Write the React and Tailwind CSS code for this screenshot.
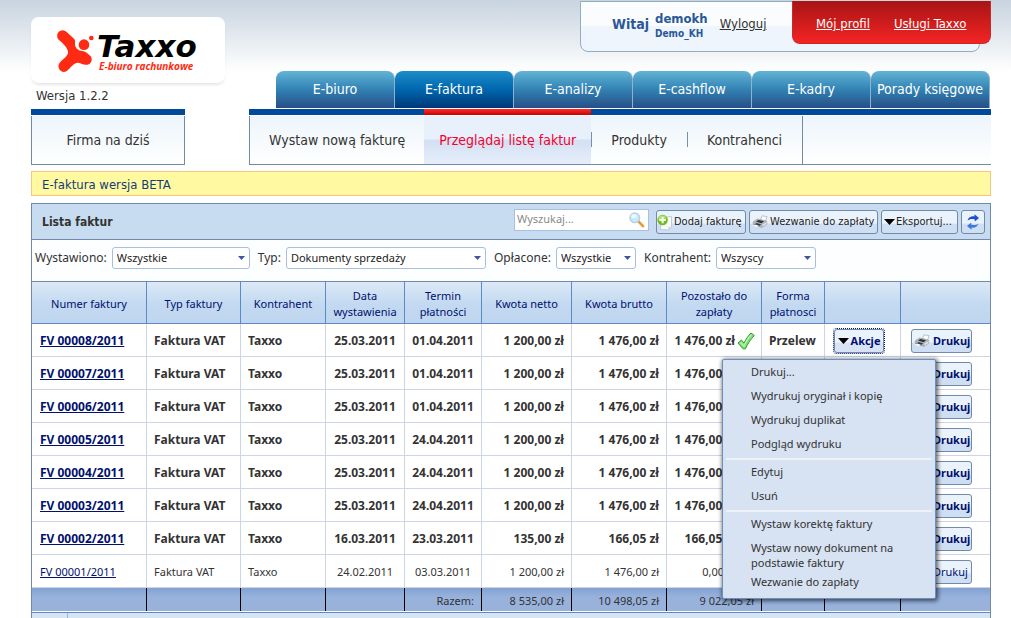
import { useState } from "react";

const TABS = ["E-biuro", "E-faktura", "E-analizy", "E-cashflow", "E-kadry", "Porady księgowe"];

const COLUMNS = [
  { label: "Numer faktury", width: "w-[115px]" },
  { label: "Typ faktury", width: "w-[94px]" },
  { label: "Kontrahent", width: "w-[85px]" },
  { label: "Data wystawienia", width: "w-[79px]" },
  { label: "Termin płatności", width: "w-[77px]" },
  { label: "Kwota netto", width: "w-[90px]" },
  { label: "Kwota brutto", width: "w-[95px]" },
  { label: "Pozostało do zapłaty", width: "w-[95px]" },
  { label: "Forma płatnosci", width: "w-[63px]" },
  { label: "", width: "w-[76px]" },
  { label: "", width: "" },
];

const INVOICES = [
  ["FV 00008/2011", "25.03.2011", "01.04.2011", "1 200,00 zł", "1 476,00 zł", "1 476,00 zł"],
  ["FV 00007/2011", "25.03.2011", "01.04.2011", "1 200,00 zł", "1 476,00 zł", "1 476,00 zł"],
  ["FV 00006/2011", "25.03.2011", "01.04.2011", "1 200,00 zł", "1 476,00 zł", "1 476,00 zł"],
  ["FV 00005/2011", "25.03.2011", "24.04.2011", "1 200,00 zł", "1 476,00 zł", "1 476,00 zł"],
  ["FV 00004/2011", "25.03.2011", "24.04.2011", "1 200,00 zł", "1 476,00 zł", "1 476,00 zł"],
  ["FV 00003/2011", "25.03.2011", "24.04.2011", "1 200,00 zł", "1 476,00 zł", "1 476,00 zł"],
  ["FV 00002/2011", "16.03.2011", "23.03.2011", "135,00 zł", "166,05 zł", "166,05 zł"],
  ["FV 00001/2011", "24.02.2011", "03.03.2011", "1 200,00 zł", "1 476,00 zł", "0,00 zł"],
];

const MENU_GROUPS = [
  ["Drukuj...", "Wydrukuj oryginał i kopię", "Wydrukuj duplikat", "Podgląd wydruku"],
  ["Edytuj", "Usuń"],
  ["Wystaw korektę faktury", "Wystaw nowy dokument na podstawie faktury", "Wezwanie do zapłaty"],
];

function LogoMark() {
  return (
    <svg viewBox="0 0 120 132" className="h-11 w-10 shrink-0" aria-hidden="true">
      <path
        fill="#ff2a13"
        d="M35 12 L57 32 C62 37 60 43 60 48 C61 62 70 68 82 69 C90 70 96 75 103 81 A16 16 0 0 1 97 110 C86 113 76 104 68 104 C58 105 48 116 41 124 A16 16 0 0 1 13 106 C18 98 37 86 39 75 C40 63 30 50 11 35 A15.500 15.500 0 0 1 35 12Z"
      />
      <circle cx="87" cy="50" r="16" fill="#ff2a13" />
      <circle cx="109" cy="30" r="7" fill="#ff2a13" />
    </svg>
  );
}

function CheckIcon() {
  return (
    <svg viewBox="0 0 18 18" className="h-[18px] w-[18px] shrink-0" aria-hidden="true">
      <path d="M1 11 L4.500 8 L7 11 C9 7 11.500 3.500 14 1 L17.300 3.500 C13.500 7.500 10.500 12 8.500 16.800 L6 16.800 Z" fill="#7fe07a" stroke="#2f9e32" strokeWidth="1" strokeLinejoin="round" />
      <path d="M3.500 10.500 L7 14 C9 9.500 11.500 5.500 14.500 2.800" fill="none" stroke="#baf5b0" strokeWidth="1.200" />
    </svg>
  );
}

function PrinterIcon() {
  return (
    <svg viewBox="0 0 16 16" className="h-4 w-4 shrink-0" aria-hidden="true">
      <path d="M8.500 5.500 L10 1.800 L15 2.600 L13.500 7.500 Z" fill="#fcfdff" stroke="#a4aab4" strokeWidth=".7" />
      <path d="M1 8 L5.500 5 L14.500 7 L15 10 L10 13.500 L1.500 11 Z" fill="#b0b5bb" stroke="#8f959d" strokeWidth=".5" />
      <path d="M4 7.600 L6.500 5.900 L12 7.200 L9.500 9.200 Z" fill="#2f3338" />
      <path d="M2 10.500 L4.800 9.100 L9.300 10.500 L6.800 12.200 Z" fill="#3a3e44" />
      <path d="M.5 11.600 L3.500 10.600 L7 11.800 L4.500 13.300 Z" fill="#f2f4f6" />
      <path d="M10.500 10.500 L14.500 8 L14.500 10 L10.500 12.800 Z" fill="#dfe2e6" />
    </svg>
  );
}

function AddDocIcon() {
  return (
    <svg viewBox="0 0 16 17" className="h-[17px] w-4 shrink-0" aria-hidden="true">
      <path d="M4 3.500 L14.500 2.500 L14.500 13 L11.500 16 L3.500 15.500 Z" fill="#f8fafc" stroke="#b3bfcc" strokeWidth=".8" />
      <path d="M11 16 L11.500 12.800 L14.500 13Z" fill="#cfd7e0" />
      <circle cx="5.600" cy="6" r="5.200" fill="#6cbd1b" />
      <ellipse cx="5.200" cy="4" rx="4" ry="2.700" fill="#a9e065" />
      <path d="M5.600 2.800 V9.200 M2.400 6 H8.800" stroke="#fff" strokeWidth="2" />
    </svg>
  );
}

function SearchIcon() {
  return (
    <svg viewBox="0 0 16 16" className="h-4 w-4 shrink-0" aria-hidden="true">
      <path d="M9.500 9.500 L14 14.200" stroke="#e59a3c" strokeWidth="2.600" strokeLinecap="round" />
      <circle cx="5.800" cy="5.800" r="4.900" fill="#c9e9fb" stroke="#b3cfe6" strokeWidth="1.300" />
      <ellipse cx="4.800" cy="4.300" rx="2.600" ry="2" fill="#effaff" />
    </svg>
  );
}

function RefreshIcon() {
  return (
    <svg viewBox="0 0 14 16" className="h-4 w-3.5 shrink-0" aria-hidden="true">
      <path d="M1.500 6.500 C2.500 3 6 1.800 8.500 2.500 L8.500 .3 L13 4 L8.800 7.500 L8.600 5.300 C6 4.500 3.500 5 1.500 6.500Z" fill="#1c4fd0" />
      <path d="M12.500 9.500 C11.500 13 8 14.200 5.500 13.500 L5.500 15.700 L1 12 L5.200 8.500 L5.400 10.700 C8 11.500 10.500 11 12.500 9.500Z" fill="#3a78de" />
    </svg>
  );
}

function DownTriangle() {
  return (
    <svg viewBox="0 0 11 6" className="h-1.5 w-[11px] shrink-0" aria-hidden="true">
      <path d="M0 0H11L5.500 6Z" fill="#000" />
    </svg>
  );
}

const BUTTON =
  "flex h-6 items-center rounded-[3px] border border-[#7389a8] bg-linear-to-b from-[#eaf2fc] from-55% to-[#cfdff3] to-60% whitespace-nowrap";

function ToolButton({ children, className, label }) {
  return (
    <button type="button" aria-label={label} className={`${BUTTON} font-['DejaVu_Sans_Condensed',sans-serif] text-[11px] text-[#222] ${className}`}>
      {children}
    </button>
  );
}

function Filter({ id, label, options, width }) {
  return (
    <div className="flex items-center gap-[5px]">
      <label htmlFor={id} className="text-xs whitespace-nowrap">{label}</label>
      <div className={`relative ${width}`}>
        <select id={id} className="block h-[22px] w-full appearance-none rounded-[3px] border border-[#a7bfe0] bg-white pl-1 text-[11px] text-[#222]">
          {options.map((o) => (
            <option key={o}>{o}</option>
          ))}
        </select>
        <svg viewBox="0 0 7 4" className="pointer-events-none absolute top-[9px] right-[5px] h-1 w-[7px]" aria-hidden="true">
          <path d="M0 0H7L3.500 4Z" fill="#4055a0" />
        </svg>
      </div>
    </div>
  );
}

function ActionMenu() {
  return (
    <div role="menu" className="absolute top-[30px] -left-28 z-10 w-[214px] rounded-[2px] border border-[#6a8fc0] bg-[#d7e2f2] pb-1 text-left text-[11px] leading-[15px] font-normal text-[#333] shadow-[1px_1px_4px_1px_rgba(0,0,0,0.6)]">
      {MENU_GROUPS.map((group, i) => (
        <div key={group[0]}>
          {i > 0 && <hr className="mx-[3px] mt-0.5 h-0.5 border-0 bg-[#eef1f6]" />}
          {group.map((item) => (
            <button key={item} type="button" role="menuitem" className="block min-h-6 w-full pt-1 pr-6 pl-7 text-left align-top">
              <span className="block min-h-5">{item}</span>
            </button>
          ))}
        </div>
      ))}
    </div>
  );
}

function InvoiceRow({ data, index, menuOpen, onToggle }) {
  const [number, issued, due, net, gross, left] = data;
  const last = index === INVOICES.length - 1;
  const cell = "border-r border-b border-[#ccd5e4] bg-white";
  const textCell = `${cell} pt-0.5`;
  return (
    <tr className={last ? "h-[33px] text-[11px]" : "h-[33px] text-xs font-bold"}>
      <td className={`${textCell} pl-2`}>
        <a href="#faktura" className="text-[#00106e] underline">{number}</a>
      </td>
      <td className={`${textCell} pl-[7px]`}>Faktura VAT</td>
      <td className={`${textCell} pl-[7px]`}>Taxxo</td>
      <td className={`${textCell} text-center`}>{issued}</td>
      <td className={`${textCell} text-center`}>{due}</td>
      <td className={`${textCell} pr-[7px] text-right`}>{net}</td>
      <td className={`${textCell} pr-[7px] text-right`}>{gross}</td>
      <td className={`${textCell} pr-1.5`}>
        <div className="flex items-center justify-end gap-0.5 whitespace-nowrap">
          {left}
          <CheckIcon />
        </div>
      </td>
      <td className={`${textCell} pl-[7px]`}>Przelew</td>
      <td className={`${cell} pt-px pl-[9px]`}>
        <div className="relative w-[50px]">
          <button
            type="button"
            onClick={onToggle}
            className={`${BUTTON} w-full justify-center gap-0.5 pt-px text-[11px] text-[#00106e] ${index === 0 ? "from-[#c4d4ea] to-[#d8e4f5] outline-1 outline-dotted outline-[#00106e]" : ""}`}
          >
            <DownTriangle />
            Akcje
          </button>
          {menuOpen && <ActionMenu />}
        </div>
      </td>
      <td className="border-b border-[#ccd5e4] bg-white pt-px pl-2.5">
        <button type="button" className={`${BUTTON} w-[61px] gap-[3px] pt-px pl-0.5 text-[11px] text-[#00106e]`}>
          <PrinterIcon />
          Drukuj
        </button>
      </td>
    </tr>
  );
}

function SectionLink({ children, active, divider, padding = "px-5" }) {
  return (
    <a
      href="#sekcja"
      className={`relative flex items-center ${padding} ${
        active ? "bg-linear-to-b from-[#e8f0fc] from-48% via-[#d3e0f3] via-50% to-[#e6eefb] text-[#f5002d]" : ""
      }`}
    >
      {active && <span className="absolute inset-x-0 -top-[7px] h-1.5 bg-linear-to-b from-[#ff2a2a] to-[#c40000]" />}
      {children}
      {divider && <span className="absolute top-4 -right-px h-[15px] w-px bg-[#7690b0]" />}
    </a>
  );
}

export default function App() {
  const [openRow, setOpenRow] = useState(0);

  return (
    <div className="min-h-screen bg-white bg-linear-to-b from-[#c8d4df] to-white to-[72px] pr-5 pl-[31px] font-['Noto_Sans',sans-serif] text-[#333]">
      <header className="flex h-[109px] justify-between font-['DejaVu_Sans_Condensed',sans-serif]">
        <div className="pt-[17px]">
          <div className="flex h-[66px] w-[194px] items-center rounded-lg bg-white pl-6 shadow-[0_3px_3px_-1px_rgba(0,0,0,0.1)]">
            <LogoMark />
            <div className="pt-1 pl-0.5">
              <div className="font-['DejaVu_Sans',sans-serif] text-[31px] leading-7 font-bold text-black italic">Taxxo</div>
              <div className="pl-0.5 font-['Open_Sans',sans-serif] text-[10px] leading-3 font-bold whitespace-nowrap text-[#ff2a13] italic">E-biuro rachunkowe</div>
            </div>
          </div>
          <div className="pt-1 pl-[5px] text-[13px] leading-[18px]">Wersja 1.2.2</div>
        </div>

        <div className="flex flex-col items-end justify-between pt-px">
          <div className="flex h-[51px] w-[411px]">
            <div className="relative mr-[11px] flex flex-1 rounded-b-lg border border-[#93adc0] bg-linear-to-b from-[#fafcfe] from-50% to-[#eef5fc] to-50%">
              <div className="flex h-11 items-center gap-1.5 pl-[31px]">
                <span className="text-sm font-bold text-[#2a5898]">Witaj</span>
                <span className="pt-1 font-bold text-[#2a5898]">
                  <span className="block text-[13px] leading-4">demokh</span>
                  <span className="block text-[10px] leading-[14px]">Demo_KH</span>
                </span>
                <a href="#wyloguj" className="ml-1.5 text-[13px] underline">Wyloguj</a>
              </div>
              <div className="absolute -top-px -right-3 flex h-[43px] w-[199px] items-center gap-6 rounded-b-lg border border-t-0 border-[#c42a2f] bg-linear-to-b from-[#a81414] to-[#f42424] pt-1 pl-[23px] text-[13px] whitespace-nowrap text-white">
                <a href="#profil" className="underline">Mój profil</a>
                <a href="#uslugi" className="underline">Usługi Taxxo</a>
              </div>
            </div>
          </div>
          <nav className="mr-px mb-px flex h-[37px] text-sm text-white">
            {TABS.map((tab) => (
              <a
                key={tab}
                href="#modul"
                className={`flex w-[119px] items-center justify-center rounded-t-lg border-r border-[#8fb3cf] bg-linear-to-b pb-0.5 whitespace-nowrap ${
                  tab === "E-faktura" ? "from-[#1c8cc8] via-[#0067ae] via-50% to-[#003878]" : "from-[#62b4d6] via-[#3282b4] via-50% to-[#264f86]"
                }`}
              >
                {tab}
              </a>
            ))}
          </nav>
        </div>
      </header>

      <nav className="flex gap-16 font-['DejaVu_Sans_Condensed',sans-serif] text-sm">
        <div className="w-[154px] border-t-[6px] border-[#004a9c] pt-px">
          <a href="#dzis" className="flex h-[49px] items-center justify-center border border-t-0 border-[#7389a8] bg-linear-to-b from-[#edf5fb] to-white">
            Firma na dziś
          </a>
        </div>
        <div className="flex-1 border-t-[6px] border-[#004a9c] pt-px">
          <div className="flex h-[49px] border-b border-l border-[#7389a8] bg-linear-to-b from-[#edf5fb] to-white">
            <SectionLink divider padding="px-[19px]">Wystaw nową fakturę</SectionLink>
            <SectionLink active divider padding="px-[15px]">Przeglądaj listę faktur</SectionLink>
            <SectionLink divider>Produkty</SectionLink>
            <SectionLink>Kontrahenci</SectionLink>
            <div className="border-l border-[#7389a8]" />
          </div>
        </div>
      </nav>

      <p className="mt-1.5 h-[25px] border border-[#fbc57f] bg-[#fffaa2] pl-2.5 font-['DejaVu_Sans_Condensed',sans-serif] text-[13px] leading-[25px] text-[#143c78]">
        E-faktura wersja BETA
      </p>

      <main className="mt-[7px] border border-b-0 border-[#7389a8]">
        <div className="flex h-9 items-center gap-[3px] border-b border-[#7389a8] bg-[#c8dcf1] pr-[5px] pl-2.5">
          <h1 className="mr-auto font-['DejaVu_Sans_Condensed',sans-serif] text-xs font-bold">Lista faktur</h1>
          <div className="mr-1 mb-1 flex h-[22px] w-[135px] items-center border border-[#a7bfe0] bg-white pr-[3px] pl-0.5">
            <input type="text" aria-label="Wyszukaj" placeholder="Wyszukaj..." className="w-full min-w-0 text-[11px] outline-none placeholder:text-[#8a8a8a]" />
            <SearchIcon />
          </div>
          <ToolButton className="w-[90px] gap-px pt-px"><AddDocIcon />Dodaj fakturę</ToolButton>
          <ToolButton className="w-[129px] gap-0.5 pt-px pl-0.5"><PrinterIcon />Wezwanie do zapłaty</ToolButton>
          <ToolButton className="w-[77px] gap-px pt-px pl-0.5"><DownTriangle />Eksportuj...</ToolButton>
          <ToolButton label="Odśwież" className="w-6 justify-center"><RefreshIcon /></ToolButton>
        </div>

        <div className="flex h-[42px] items-start gap-2 border-b border-[#7389a8] bg-[#fdfeff] pt-[7px] pl-[3px]">
          <Filter id="wystawiono" label="Wystawiono:" options={["Wszystkie"]} width="w-[138px]" />
          <Filter id="typ" label="Typ:" options={["Dokumenty sprzedaży"]} width="w-[200px]" />
          <Filter id="oplacone" label="Opłacone:" options={["Wszystkie"]} width="w-20" />
          <Filter id="kontrahent" label="Kontrahent:" options={["Wszyscy"]} width="w-[100px]" />
        </div>

        <table className="w-full table-fixed border-separate border-spacing-0">
          <thead>
            <tr className="h-[42px]">
              {COLUMNS.map((c, i) => (
                <th
                  key={i}
                  scope="col"
                  className={`${c.width} border-b border-[#5c8ac6] bg-linear-to-b from-[#dce9f6] via-[#c2d9f1] via-55% to-[#c0d6f0] px-1 pt-0.5 text-[11px] leading-4 font-normal text-[#00106e] ${i < 10 ? "border-r" : ""}`}
                >
                  {c.label}
                </th>
              ))}
            </tr>
          </thead>
          <tbody>
            {INVOICES.map((row, i) => (
              <InvoiceRow key={row[0]} data={row} index={i} menuOpen={openRow === i} onToggle={() => setOpenRow(openRow === i ? -1 : i)} />
            ))}
          </tbody>
          <tfoot>
            <tr className="h-[23px] text-right text-[11px]">
              {["", "", "", "", "Razem:", "8 535,00 zł", "10 498,05 zł", "9 022,05 zł", "", "", ""].map((t, i) => (
                <td key={i} className={`bg-linear-to-b from-[#82a2d2] to-[#98b2dc] to-40% pt-1 pr-[7px] whitespace-nowrap ${i < 10 ? "border-r border-black" : ""}`}>
                  {t}
                </td>
              ))}
            </tr>
          </tfoot>
        </table>
        <div className="border-t border-white">
          <div className="flex h-1.5 border-t border-[#5c8ac6] bg-[#d6e4f4]">
            <div className="w-9 border-r border-[#9db5d6]" />
          </div>
        </div>
      </main>
    </div>
  );
}
